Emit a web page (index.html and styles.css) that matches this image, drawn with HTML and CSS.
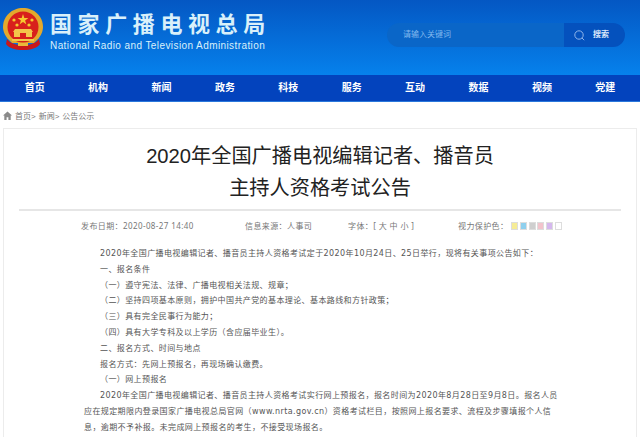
FILE: index.html
```html
<!DOCTYPE html>
<html lang="zh-CN">
<head>
    <meta charset="UTF-8">
    <meta name="viewport" content="width=device-width, initial-scale=1.0">
    <title>2020年全国广播电视编辑记者、播音员主持人资格考试公告</title>
    <link rel="stylesheet" href="styles.css">
</head>
<body>
    <header class="header">
        <div class="brand">
            <svg class="emblem" width="40" height="42" viewBox="0 0 40 42">
                <path d="M6 32C1 27 0 22 0 19 0 8 9 0 20 0s20 8 20 19c0 3-1 8-6 13l-3 3H9z" fill="#e3a92c"/>
                <circle cx="20" cy="19" r="15.5" fill="#d8201c"/>
                <polygon points="20,6 21.3,10 25.4,10 22.1,12.4 23.3,16.3 20,13.9 16.7,16.3 17.9,12.4 14.6,10 18.7,10" fill="#f6c92f"/>
                <circle cx="11" cy="12" r="1.6" fill="#f6c92f"/>
                <circle cx="29" cy="12" r="1.6" fill="#f6c92f"/>
                <circle cx="14" cy="17" r="1.6" fill="#f6c92f"/>
                <circle cx="26" cy="17" r="1.6" fill="#f6c92f"/>
                <path d="M12 21h16l2 3H10zM11 24h18v5H11z" fill="#f3c64a"/>
                <path d="M17 25h6v4h-6z" fill="#d8201c"/>
                <path d="M9 31h22v2H9z" fill="#f3c64a"/>
                <path d="M4 31c3 4 8 6 16 6s13-2 16-6l1 5c-3 4-9 6-17 6S6 40 3 36z" fill="#c9181a"/>
                <path d="M15 35h10v3H15z" fill="#e9b93a"/>
            </svg>
            <div class="brand-text">
                <div class="brand-cn">国家广播电视总局</div>
                <div class="brand-en">National Radio and Television Administration</div>
            </div>
        </div>
        <form class="search">
            <span class="search-input">请输入关键词</span>
            <span class="search-btn">
                <svg width="11" height="11" viewBox="0 0 11 11" fill="none" stroke="#8fb4ea" stroke-width="1">
                    <circle cx="5" cy="5" r="4.2"/>
                    <path d="M8 8l2.2 2.2"/>
                </svg>
                搜索
            </span>
        </form>
    </header>

    <nav class="nav">
        <a>首页</a>
        <a>机构</a>
        <a>新闻</a>
        <a>政务</a>
        <a>科技</a>
        <a>服务</a>
        <a>互动</a>
        <a>数据</a>
        <a>视频</a>
        <a>党建</a>
    </nav>

    <div class="crumbs">
        <svg width="9" height="9" viewBox="0 0 9 9"><path d="M4.5 0.5L0 4.6h1.3V9h2.3V6.2h1.8V9h2.3V4.6H9z" fill="#8a8a8a"/></svg>
        <span>首页&gt;</span>
        <span>新闻&gt;</span>
        <span>公告公示</span>
    </div>

    <main class="article">
        <h1 class="title">2020年全国广播电视编辑记者、播音员<br>主持人资格考试公告</h1>
        <div class="meta">
            <span class="meta-date">发布日期：2020-08-27 14:40</span>
            <span class="meta-source">信息来源：人事司</span>
            <span class="meta-font">字体：[ 大 中 小 ]</span>
            <span class="meta-eye">视力保护色：<i class="swatch yellow"></i><i class="swatch blue"></i><i class="swatch grey"></i><i class="swatch pink"></i><i class="swatch purple"></i><i class="swatch white"></i></span>
        </div>
        <div class="content">
            <p>2020年全国广播电视编辑记者、播音员主持人资格考试定于2020年10月24日、25日举行，现将有关事项公告如下：</p>
            <p>一、报名条件</p>
            <p>（一）遵守宪法、法律、广播电视相关法规、规章；</p>
            <p>（二）坚持四项基本原则，拥护中国共产党的基本理论、基本路线和方针政策；</p>
            <p>（三）具有完全民事行为能力；</p>
            <p>（四）具有大学专科及以上学历（含应届毕业生）。</p>
            <p>二、报名方式、时间与地点</p>
            <p>报名方式：先网上预报名，再现场确认缴费。</p>
            <p>（一）网上预报名</p>
            <p>2020年全国广播电视编辑记者、播音员主持人资格考试实行网上预报名，报名时间为2020年8月28日至9月8日。报名人员应在规定期限内登录国家广播电视总局官网（www.nrta.gov.cn）资格考试栏目，按照网上报名要求、流程及步骤填报个人信息，逾期不予补报。未完成网上预报名的考生，不接受现场报名。</p>
        </div>
    </main>
</body>
</html>
```

FILE: styles.css
```css
html, body {
    height: 437px;
    overflow: hidden;
}
body {
    margin: 0;
    background-color: #fff;
    color: #555;
    font-family: "Liberation Sans", "Noto Sans CJK SC", sans-serif;
}
.header {
    height: 75px;
    display: flex;
    justify-content: space-between;
    background: linear-gradient(#0457c3, #0681ec);
    box-sizing: border-box;
    padding: 8px 15px 0 3px;
}
.brand {
    display: flex;
    gap: 7px;
    align-items: flex-start;
}
.emblem {
    flex: none;
}
.brand-text {
    padding-top: 4px;
    color: #d9f0fa;
}
.brand-cn {
    font-size: 22px;
    font-weight: 700;
    line-height: 26px;
    letter-spacing: 5.6px;
    white-space: nowrap;
}
.brand-en {
    font-size: 10px;
    line-height: 13px;
    margin-top: 1px;
    letter-spacing: 0.41px;
    white-space: nowrap;
}
.search {
    width: 238px;
    height: 24px;
    margin: 15px 0 0;
    display: flex;
    border-radius: 12px;
    overflow: hidden;
    font-size: 8px;
    line-height: 24px;
}
.search-input {
    flex: 1;
    padding-left: 16px;
    background-color: #0a66c8;
    color: #82b8ee;
}
.search-btn {
    width: 61px;
    box-sizing: border-box;
    padding-left: 10px;
    display: flex;
    align-items: center;
    gap: 8px;
    background-color: #0451bd;
    color: #dbe8fa;
    font-weight: 700;
}
.nav {
    height: 27px;
    display: grid;
    grid-template-columns: repeat(10, 1fr);
    padding: 0 3px;
    background-color: #0343bd;
    border-bottom: 1px solid #2a78dc;
    box-sizing: border-box;
}
.nav a {
    text-align: center;
    color: #fff;
    font-size: 10px;
    font-weight: 700;
    line-height: 26px;
}
.crumbs {
    height: 26px;
    display: flex;
    align-items: center;
    gap: 3px;
    padding-left: 3px;
    box-sizing: border-box;
    font-size: 8px;
    color: #777;
}
.article {
    margin: 0 3px;
    padding: 0 15px 40px;
    border: 1px solid #ececec;
    font-family: "DejaVu Sans", "Noto Sans CJK SC", sans-serif;
}
.title {
    margin: 0;
    padding: 11px 0 5px;
    text-align: center;
    font-family: "Liberation Sans", "Noto Sans CJK SC", sans-serif;
    font-size: 20.2px;
    font-weight: 400;
    line-height: 32px;
    color: #222;
    border-bottom: 2px solid #e6e6e6;
}
.meta {
    height: 29px;
    display: flex;
    align-items: center;
    font-family: "Noto Sans", "Noto Sans CJK SC", sans-serif;
    font-size: 8px;
    letter-spacing: 0.4px;
    color: #777;
    white-space: nowrap;
}
.meta-date {
    margin-left: 62px;
    width: 164px;
}
.meta-source {
    width: 103px;
}
.meta-font {
    width: 110px;
}
.meta-eye {
    display: flex;
    align-items: center;
}
.swatch {
    width: 5px;
    height: 6px;
    margin-right: 1.7px;
    border: 1px solid #ddd;
}
.swatch.yellow {
    margin-left: 3px;
    background-color: #f6ec96;
}
.swatch.blue { background-color: #8fd0ee; }
.swatch.grey { background-color: #cfcfcf; }
.swatch.pink { background-color: #f2c4cc; }
.swatch.purple { background-color: #d5b8ee; }
.swatch.white { background-color: #fff; }
.content {
    margin-top: 6px;
    padding: 0 63px 0 65px;
    font-size: 8px;
    letter-spacing: 0.4px;
    line-height: 15.8px;
    color: #555;
}
.content p {
    margin: 0;
    text-indent: 16px;
}
```
